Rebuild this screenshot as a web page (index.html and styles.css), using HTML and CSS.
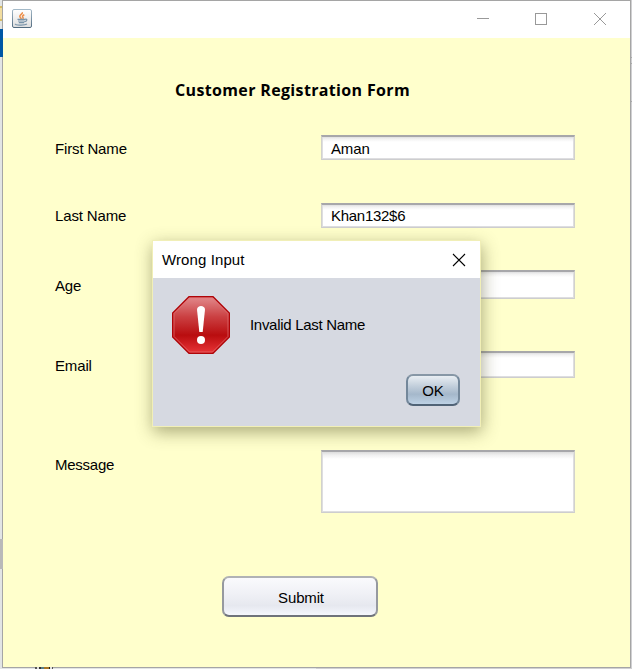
FILE: index.html
```html
<!DOCTYPE html>
<html lang="en">
<head>
<meta charset="utf-8">
<title>Customer Registration Form</title>
<link rel="stylesheet" href="styles.css">
</head>
<body>
<main class="window">
  <header class="titlebar">
    <svg class="java-icon" width="20" height="20" viewBox="0 0 20 20">
      <defs>
        <linearGradient id="tile" x1="0" y1="0" x2="0" y2="1"><stop offset="0" stop-color="#fff"/><stop offset="1" stop-color="#dedede"/></linearGradient>
        <linearGradient id="edge" x1="0" y1="0" x2="0" y2="1"><stop offset="0" stop-color="#a3b9c8"/><stop offset="1" stop-color="#526b80"/></linearGradient>
      </defs>
      <rect x=".5" y=".5" width="19" height="18" rx="1.5" fill="url(#tile)" stroke="url(#edge)"/>
      <path d="M10.3 3.2c.8 1.7-2.700 2.500-2.500 4.200.1 1 1.100 1.500 1.500 2.600M12.300 5.800c-1.800.8-2.300 1.700-1.300 2.700.4.600.2 1.100-.3 1.500" fill="none" stroke="#ee8c45" stroke-width="1.500"/>
      <path d="M5.500 10.300h7.500M6 12h6.500M6.800 13.700h5.400M13 10.300c2.800-.7 2.200 2.200-.6 2.400M3.500 14.800c-1.500 1.500 9 1.900 11.500.3" fill="none" stroke="#7893a9" stroke-width="1.200"/>
    </svg>
    <svg class="controls" width="132" height="14" viewBox="0 0 132 14" fill="none" stroke="#999">
      <path d="M1 6.500h12"/>
      <rect x="59.500" y="1.500" width="11" height="11"/>
      <path d="M118 1l12 12M130 1L118 13"/>
    </svg>
  </header>
  <form class="form">
    <h1 class="heading">Customer Registration Form</h1>
    <div class="row first"><span class="label">First Name</span><div class="field">Aman</div></div>
    <div class="row last"><span class="label">Last Name</span><div class="field">Khan132$6</div></div>
    <div class="row age"><span class="label">Age</span><div class="field"></div></div>
    <div class="row email"><span class="label">Email</span><div class="field"></div></div>
    <div class="row message"><span class="label">Message</span><div class="field"></div></div>
    <button class="button submit" type="button">Submit</button>
  </form>
</main>
<section class="dialog">
  <header class="dialog-title">
    <span>Wrong Input</span>
    <svg width="14" height="14" viewBox="0 0 14 14" fill="none" stroke="#000" stroke-width="1.100"><path d="M1 1l12 12M13 1L1 13"/></svg>
  </header>
  <div class="dialog-message">
    <svg width="58" height="58" viewBox="0 0 58 58">
      <defs><linearGradient id="stop" x1="0" y1="0" x2="0" y2="1"><stop offset="0" stop-color="#e28b8d"/><stop offset=".35" stop-color="#cb4143"/><stop offset=".68" stop-color="#b90d0f"/><stop offset="1" stop-color="#e93437"/></linearGradient></defs>
      <path d="M17 .700h24L57.300 17v24L41 57.300H17L.7 41V17z" fill="url(#stop)" stroke="#af0508" stroke-width="1.400"/>
      <path d="M17.500 2h23L56 17.500v23L40.500 56h-23L2 40.500v-23z" fill="none" stroke="#e57779" stroke-opacity=".65"/>
      <path d="M25 13.500c0-4.700 8-4.700 8 0L30.700 36h-3.400z" fill="#fff"/>
      <circle cx="29" cy="44" r="4" fill="#fff"/>
    </svg>
    <span class="dialog-text">Invalid Last Name</span>
  </div>
  <button class="button ok" type="button">OK</button>
</section>
<div class="backdrop-folder"></div>
<div class="backdrop-selection"></div>
<div class="backdrop-thumb"></div>
<div class="backdrop-taskicon"></div>
<div class="backdrop-lines"></div>
</body>
</html>
```

FILE: styles.css
```css
* { box-sizing: border-box; }

body {
  margin: 0;
  width: 632px;
  height: 669px;
  overflow: hidden;
  position: relative;
  background: linear-gradient(90deg, #e2e5e5 50%, #d0d0d2 50%);
  font: 15px "Liberation Sans", Arial, sans-serif;
  letter-spacing: -0.15px;
  color: #000;
}

.window {
  width: 629px;
  height: 668px;
  margin-left: 2px;
  border: 1px solid #a5a5a5;
  background: #ffffcc;
}

.titlebar {
  height: 37px;
  padding: 8px 22px 0 9px;
  display: flex;
  justify-content: space-between;
  background: #fff;
}

.controls { margin-top: 3px; }

.form {
  display: flex;
  flex-direction: column;
  padding: 40px 55px 0 52px;
}

.heading {
  margin: 0 0 33px 120px;
  height: 24px;
  font: bold 16px/24px "Open Sans", sans-serif;
  letter-spacing: 0.35px;
  white-space: nowrap;
}

.row {
  display: grid;
  grid-template-columns: 266px 254px;
  grid-template-rows: 100%;
}

.label { line-height: 18px; padding-top: 5px; }

.field {
  padding: 3px 9px 0;
  border: 2px solid;
  border-color: #a7a7aa #d2d2cc #cdcdcf;
  border-width: 2px 1px 1px;
  box-shadow: inset -1px -1px #dedee0, inset 1px 0 #dedee0;
  background: linear-gradient(#dfdfe0, #f2f2f2 2px, #fff 5px);
  line-height: 18px;
}

.first { height: 25px; margin-bottom: 43px; }
.last { height: 25px; margin-bottom: 42px; }
.last .label { padding-top: 4px; }
.last .field { padding-top: 2px; letter-spacing: -0.28px; }
.age { height: 29px; margin-bottom: 52px; }
.age .label { padding-top: 7px; }
.email { height: 27px; margin-bottom: 72px; }
.email .label { padding-top: 6px; }
.message { height: 63px; margin-bottom: 63px; }
.message .label { padding-top: 6px; letter-spacing: -0.25px; }
.message .field { background: linear-gradient(#dcdcdc, #f0f0f0 3px, #fff 7px); }

.button {
  padding: 0;
  border: 2px solid;
  border-color: #b0b2b5 #96999f #6f737b;
  border-radius: 7px;
  font: inherit;
  letter-spacing: inherit;
  color: #000;
}

.submit {
  width: 156px;
  height: 41px;
  margin-left: 167px;
  padding: 2px 0 0 2px;
  background: linear-gradient(#fafafd, #eff0f5 45%, #e6e8ef 75%, #f5f7fd);
}

.dialog {
  position: absolute;
  left: 152px;
  top: 240px;
  width: 329px;
  height: 187px;
  display: flex;
  flex-direction: column;
  border: 1px solid #f1efb7;
  background: #d6d9e1;
  box-shadow: 1px 5px 16px rgba(70, 70, 25, 0.46);
}

.dialog-title {
  height: 37px;
  padding: 0 14px 0 9px;
  display: flex;
  align-items: center;
  justify-content: space-between;
  background: #fff;
  letter-spacing: 0.1px;
}

.dialog-message {
  height: 58px;
  margin: 18px 0 0 19px;
  display: flex;
  align-items: center;
  gap: 20px;
}

.dialog-text { padding-bottom: 2px; letter-spacing: -0.3px; }

.ok {
  width: 54px;
  height: 32px;
  margin: 20px 20px 0 auto;
  border-color: #8797a6 #73879a #506376;
  background: linear-gradient(#e9eef3, #c0cdda 38%, #a5b8cb 65%, #bdd1e4);
}

.backdrop-folder, .backdrop-selection, .backdrop-thumb, .backdrop-taskicon, .backdrop-lines { position: absolute; }
.backdrop-folder { left: 0; top: 6px; width: 2px; height: 15px; border: solid #d8bd66; border-width: 2px 0; background: #f2dda0; }
.backdrop-selection { left: 0; top: 29px; width: 3px; height: 28px; background: #0057a5; }
.backdrop-thumb { left: 0; top: 539px; width: 3px; height: 30px; background: #b9b9b9; }
.backdrop-taskicon { left: 35px; top: 667px; width: 18px; height: 2px; background: linear-gradient(90deg, #555 2px, #ddd 2px 4px, #333 4px 6px, #567e88 6px 9px, #a87525 9px 14px, #222 14px 15px, #ddd 15px 17px, #555 17px); }
.backdrop-lines { left: 631px; top: 57px; width: 1px; height: 45px; background: linear-gradient(#aaa 1px, #d0d0d2 1px 6px, #aaa 6px 7px, #d0d0d2 7px 44px, #aaa 44px); }
```
